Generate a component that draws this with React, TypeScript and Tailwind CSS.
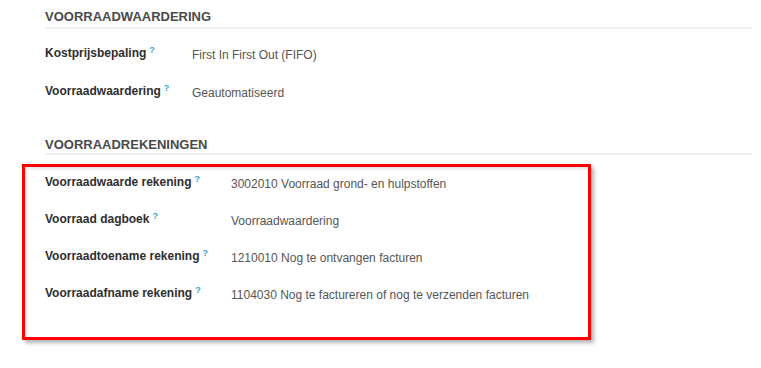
import React from 'react';

interface FieldRow {
  label: string;
  value: string;
}

const valuationRows: FieldRow[] = [
  { label: 'Kostprijsbepaling', value: 'First In First Out (FIFO)' },
  { label: 'Voorraadwaardering', value: 'Geautomatiseerd' },
];

const accountRows: FieldRow[] = [
  { label: 'Voorraadwaarde rekening', value: '3002010 Voorraad grond- en hulpstoffen' },
  { label: 'Voorraad dagboek', value: 'Voorraadwaardering' },
  { label: 'Voorraadtoename rekening', value: '1210010 Nog te ontvangen facturen' },
  { label: 'Voorraadafname rekening', value: '1104030 Nog te factureren of nog te verzenden facturen' },
];

const Field: React.FC<{ row: FieldRow; labelWidth: string }> = ({ row, labelWidth }) => (
  <div className="flex h-[16px] leading-[16px]">
    <div className={`${labelWidth} shrink-0 flex items-start`}>
      <span className="font-bold text-[#2e2e2e]">{row.label}</span>
      <span className="ml-[3px] mt-[1px] text-[9px] font-bold leading-[9px] text-[#3d9fd6]">?</span>
    </div>
    <div className="mt-[2px] text-[#555555] whitespace-nowrap">{row.value}</div>
  </div>
);

export default function App() {
  return (
    <div className="w-[761px] h-[368px] bg-white text-[12px] overflow-hidden" style={{ fontFamily: '"Liberation Sans", Arial, sans-serif' }}>
      <section className="ml-[45px] mr-[9px]">
        <h2 className="pt-[9px] pb-[2px] text-[13px] leading-[16px] font-bold text-[#4a4a4a] border-b-2 border-[#efefef]">
          VOORRAADWAARDERING
        </h2>
        <div className="pt-[16px] flex flex-col gap-[22px]">
          {valuationRows.map((row) => (
            <Field key={row.label} row={row} labelWidth="w-[147px]" />
          ))}
        </div>
      </section>

      <section className="ml-[45px] mr-[9px] mt-[38px]">
        <h2 className="text-[13px] leading-[16px] font-bold text-[#4a4a4a] border-b-2 border-[#efefef]">
          VOORRAADREKENINGEN
        </h2>
      </section>

      <div className="ml-[22px] mt-[9px] w-[569px] h-[176px] border-[3px] border-[#ff0000] pl-[20px] pt-[7px] shadow-[3px_3px_4px_rgba(0,0,0,0.3),inset_2px_2px_3px_rgba(0,0,0,0.12)]">
        <div className="flex flex-col gap-[21px]">
          {accountRows.map((row) => (
            <Field key={row.label} row={row} labelWidth="w-[186px]" />
          ))}
        </div>
      </div>
    </div>
  );
}
